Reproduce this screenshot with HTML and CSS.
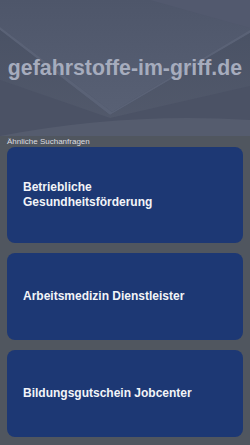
FILE: index.html
```html
<!DOCTYPE html>
<html lang="de">
<head>
<meta charset="utf-8">
<title>gefahrstoffe-im-griff.de</title>
<link rel="stylesheet" href="styles.css">
</head>
<body>
<header class="hero">
  <svg class="hero-bg" viewBox="0 0 250 136" preserveAspectRatio="none" aria-hidden="true">
    <defs>
      <linearGradient id="g1" x1="0" y1="0" x2="0" y2="1">
        <stop offset="0" stop-color="#4e566a"/>
        <stop offset="1" stop-color="#586074"/>
      </linearGradient>
      <linearGradient id="g2" x1="0" y1="0" x2="0" y2="1">
        <stop offset="0" stop-color="#4a5265"/>
        <stop offset="1" stop-color="#535a6c"/>
      </linearGradient>
    </defs>
    <rect width="250" height="136" fill="#4b5367"/>
    <polygon points="0,0 250,0 250,30 112,112 0,27" fill="url(#g1)"/>
    <polygon points="150,0 250,0 250,28 200,14" fill="#52596e"/>
    <polygon points="0,27 112,112 250,30 250,33 110,115 0,30" fill="#5a6276"/>
    <polygon points="0,30 110,115 250,33 250,136 0,136" fill="url(#g2)"/>
    <polygon points="0,80 110,118 250,86 250,136 0,136" fill="#4b5265"/>
    <path d="M0,136 Q125,112 250,120 L250,136 Z" fill="#555c6e"/>
  </svg>
  <h1 class="title">gefahrstoffe-im-griff.de</h1>
</header>
<main class="content">
  <p class="label">Ähnliche Suchanfragen</p>
  <ul class="cards">
    <li class="card"><a href="#">Betriebliche Gesundheitsförderung</a></li>
    <li class="card"><a href="#">Arbeitsmedizin Dienstleister</a></li>
    <li class="card"><a href="#">Bildungsgutschein Jobcenter</a></li>
  </ul>
</main>
</body>
</html>
```

FILE: styles.css
```css
* { box-sizing: border-box; }
html, body {
  margin: 0;
  padding: 0;
  background: #50565f;
  font-family: "Liberation Sans", Arial, sans-serif;
}
.hero {
  position: relative;
  height: 136px;
  display: flex;
  align-items: center;
  justify-content: center;
  overflow: hidden;
}
.hero-bg {
  position: absolute;
  inset: 0;
  width: 100%;
  height: 100%;
}
.title {
  position: relative;
  margin: 0;
  font-size: 21.3px;
  font-weight: bold;
  color: #a6acbd;
  white-space: nowrap;
}
.content {
  padding: 0 7px;
}
.label {
  margin: 0;
  height: 11px;
  line-height: 11px;
  font-size: 8px;
  color: #dcdde0;
}
.cards {
  list-style: none;
  margin: 0;
  padding: 0;
  display: flex;
  flex-direction: column;
  gap: 10px;
}
.card {
  min-height: 87px;
  padding: 33px 32px 33px 16px;
  background: #1d3874;
  border-radius: 8px;
  display: flex;
  align-items: center;
}
.card a {
  color: #f2f4f8;
  text-decoration: none;
  font-weight: bold;
  font-size: 12px;
  line-height: 15px;
}
```
